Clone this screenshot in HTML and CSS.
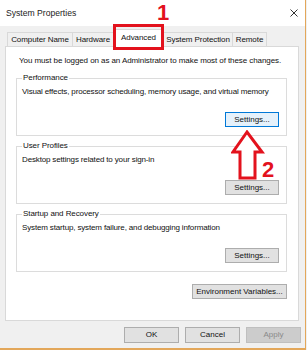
FILE: index.html
```html
<!DOCTYPE html>
<html lang="en">
<head>
  <meta charset="UTF-8" />
  <title>System Properties</title>
  <link rel="stylesheet" href="styles.css">
</head>
<body>

<div class="window">
  <header class="titlebar">
    <span class="title">System Properties</span>
    <svg class="close" width="8" height="8" viewBox="0 0 8 8">
      <path d="M0.5 0.5 L7.5 7.5 M7.5 0.5 L0.5 7.5" stroke="#333" stroke-width="1" fill="none" />
    </svg>
  </header>

  <nav class="tabs">
    <div class="tab tab-cn">Computer Name</div>
    <div class="tab tab-hw">Hardware</div>
    <div class="tab tab-adv active">Advanced</div>
    <div class="tab tab-sp">System Protection</div>
    <div class="tab tab-rm">Remote</div>
  </nav>

  <section class="panel">
    <p class="note">You must be logged on as an Administrator to make most of these changes.</p>

    <div class="group">
      <div class="group-title">Performance</div>
      <div class="group-text">Visual effects, processor scheduling, memory usage, and virtual memory</div>
      <button class="btn settings focused">Settings...</button>
    </div>

    <div class="group">
      <div class="group-title">User Profiles</div>
      <div class="group-text">Desktop settings related to your sign-in</div>
      <button class="btn settings">Settings...</button>
    </div>

    <div class="group">
      <div class="group-title">Startup and Recovery</div>
      <div class="group-text">System startup, system failure, and debugging information</div>
      <button class="btn settings">Settings...</button>
    </div>

    <button class="btn env">Environment Variables...</button>
  </section>

  <footer class="actions">
    <button class="btn action">OK</button>
    <button class="btn action">Cancel</button>
    <button class="btn action disabled">Apply</button>
  </footer>

  <!-- red annotations drawn over the dialog -->
  <div class="mark-box"></div>
  <div class="mark-num num-1">1</div>
  <svg class="mark-arrow" width="34" height="52" viewBox="0 0 34 52">
    <path d="M16 2 L2 22 L9 22 L9 48 L24 48 L24 22 L31 22 Z" fill="#fff" stroke="#e3121d" stroke-width="3" stroke-linejoin="miter" />
  </svg>
  <div class="mark-num num-2">2</div>
</div>

</body>
</html>
```

FILE: styles.css
```css
* {
  box-sizing: border-box;
}

body {
  margin: 0;
  background: #f0f0f0;
  font-family: "Liberation Sans", Arial, sans-serif;
  font-size: 8px;
  letter-spacing: -0.08px;
  color: #111;
}

.window {
  position: relative;
  width: 306px;
  height: 350px;
  background: #f0f0f0;
  border-right: 1px solid #e3a75a;
  border-bottom: 2px solid #e3a75a;
  display: flex;
  flex-direction: column;
}

.titlebar {
  height: 26px;
  background: #fff;
  display: flex;
  align-items: center;
  justify-content: space-between;
  padding: 0 7px 0 6px;
}

.title {
  font-size: 8.6px;
  letter-spacing: 0;
  color: #222;
}

.close {
  display: block;
  margin-top: -1px;
}

/* tab strip */
.tabs {
  display: flex;
  align-items: flex-end;
  height: 18px;
  margin: 3px 0 -1px 7px;
}

.tab {
  height: 15px;
  line-height: 14px;
  text-align: center;
  background: #f0f0f0;
  border: 1px solid #d9d9d9;
  border-bottom: none;
  margin-left: -1px;
}

.tab-cn { width: 66px; margin-left: 0; }
.tab-hw { width: 42px; }
.tab-adv { width: 51px; }
.tab-sp { width: 70px; }
.tab-rm { width: 35px; }

.tab.active {
  position: relative;
  height: 18px;
  line-height: 16px;
  background: #fff;
  z-index: 1;
}

/* tab page */
.panel {
  width: 294px;
  height: 275px;
  margin-left: 5px;
  background: #fff;
  border: 1px solid #d9d9d9;
  padding: 9px 0 0 10px;
  display: flex;
  flex-direction: column;
}

.note {
  margin: 0 0 12px 3px;
  line-height: 10px;
  white-space: nowrap;
}

.group {
  width: 271px;
  height: 58px;
  border: 1px solid #dcdcdc;
  margin-bottom: 10px;
  padding: 0 7px 8px 5px;
  display: flex;
  flex-direction: column;
}

.group-title {
  width: fit-content;
  margin-top: -6px;
  padding: 0 1px;
  line-height: 10px;
  background: #fff;
}

.group-text {
  margin-top: 4px;
  line-height: 10px;
  white-space: nowrap;
  letter-spacing: -0.15px;
}

.btn {
  font-family: "Liberation Sans", Arial, sans-serif;
  font-size: 8px;
  color: #111;
  background: #e1e1e1;
  border: 1px solid #adadad;
  padding: 0;
  height: 15px;
  line-height: 13px;
  text-align: center;
}

.settings {
  width: 54px;
  margin-top: auto;
  align-self: flex-end;
}

.focused {
  border-color: #0078d7;
  background: #e5f1fb;
}

.env {
  width: 95px;
  margin: 2px 0 0 176px;
}

/* dialog buttons */
.actions {
  display: flex;
  justify-content: flex-end;
  gap: 6px;
  margin-top: 6px;
  padding-right: 4px;
}

.action {
  width: 55px;
  height: 16px;
  line-height: 14px;
}

.disabled {
  background: #cccccc;
  border-color: #bfbfbf;
  color: #8a8a8a;
}

/* annotations */
.mark-box {
  position: absolute;
  left: 113px;
  top: 24px;
  width: 51px;
  height: 26px;
  border: 3px solid #e3121d;
  z-index: 2;
}

.mark-num {
  position: absolute;
  font-family: "Liberation Sans", Arial, sans-serif;
  font-weight: bold;
  font-size: 22px;
  line-height: 22px;
  letter-spacing: 0;
  color: #e3121d;
}

.num-1 {
  left: 157px;
  top: 2px;
}

.num-2 {
  left: 262px;
  top: 159px;
}

.mark-arrow {
  position: absolute;
  left: 231px;
  top: 130px;
}
```
